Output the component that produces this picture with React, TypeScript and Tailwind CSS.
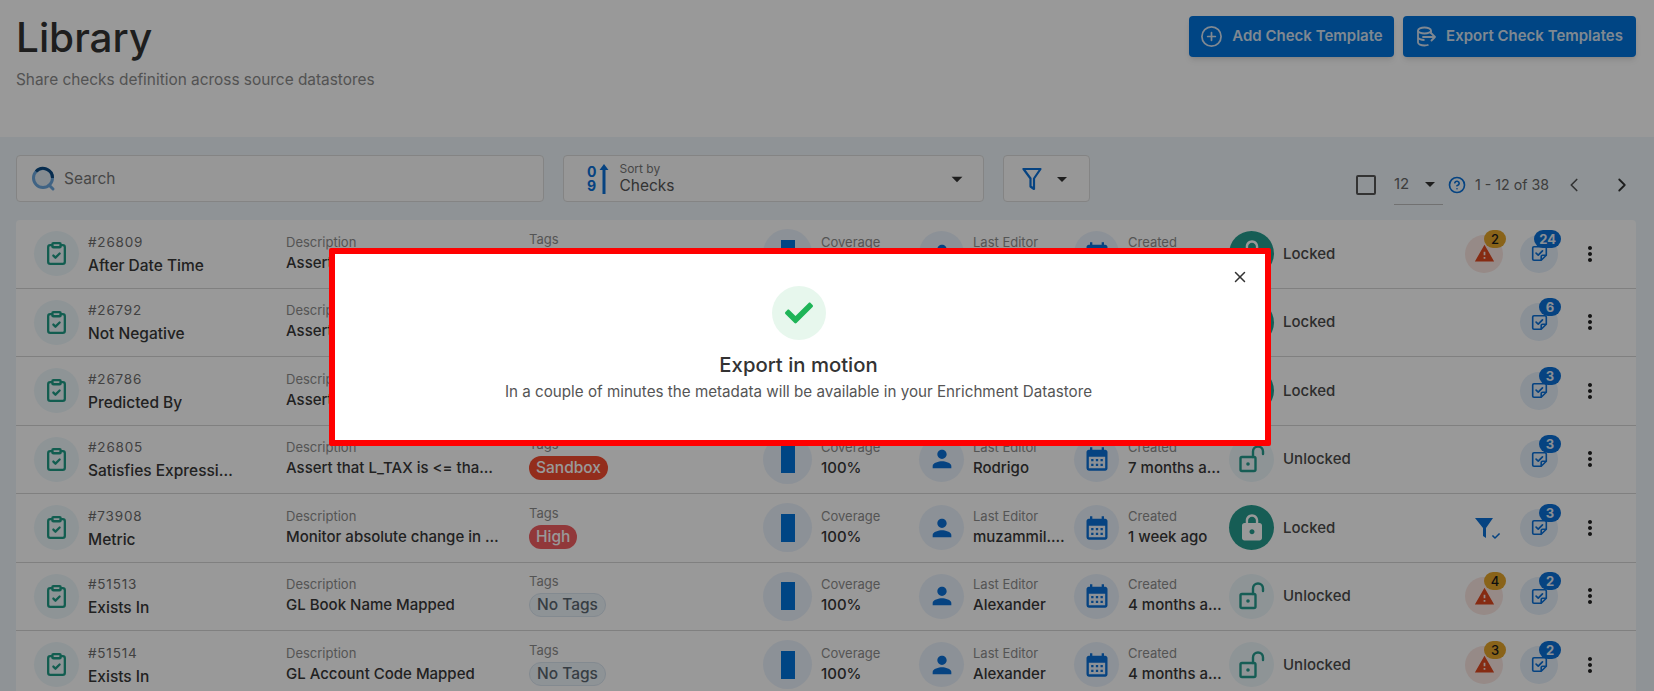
import { ChevronLeft, ChevronRight, CirclePlus, ClipboardCheck, CircleHelp, X } from "lucide-react";
import { FaCheck } from "react-icons/fa";
import { MdArrowDropDown, MdCalendarMonth, MdLock, MdMoreVert, MdPerson, MdWarning } from "react-icons/md";

type Row = {
  id: string;
  name: string;
  desc: string;
  tag: string;
  editor: string;
  created: string;
  locked: boolean;
  warn?: number;
  checks: number;
  funnel?: boolean;
};

const rows: Row[] = [
  { id: "#26809", name: "After Date Time", desc: "Assert that the date is after", tag: "No Tags", editor: "Alexander", created: "7 months ago", locked: true, warn: 2, checks: 24 },
  { id: "#26792", name: "Not Negative", desc: "Assert that value is positive", tag: "No Tags", editor: "Alexander", created: "7 months ago", locked: true, checks: 6 },
  { id: "#26786", name: "Predicted By", desc: "Assert that value is predicted", tag: "No Tags", editor: "Alexander", created: "7 months ago", locked: true, checks: 3 },
  { id: "#26805", name: "Satisfies Expression", desc: "Assert that L_TAX is <= than something", tag: "Sandbox", editor: "Rodrigo", created: "7 months ago", locked: false, checks: 3 },
  { id: "#73908", name: "Metric", desc: "Monitor absolute change in the metric", tag: "High", editor: "muzammil.khan", created: "1 week ago", locked: true, checks: 3, funnel: true },
  { id: "#51513", name: "Exists In", desc: "GL Book Name Mapped", tag: "No Tags", editor: "Alexander", created: "4 months ago", locked: false, warn: 4, checks: 2 },
  { id: "#51514", name: "Exists In", desc: "GL Account Code Mapped", tag: "No Tags", editor: "Alexander", created: "4 months ago", locked: false, warn: 3, checks: 2 },
];

const OpenLock = () => (
  <svg width="28" height="30" viewBox="0 0 28 30" fill="none" stroke="#269c8e" strokeWidth="2.4">
    <rect x="2.500" y="13" width="15" height="14" rx="1.500" />
    <circle cx="10" cy="20" r="1.800" fill="#269c8e" stroke="none" />
    <path d="M15 13V7.500a5 5 0 0 1 10 0V10" strokeLinecap="round" />
  </svg>
);

const NoteCheck = () => (
  <svg width="17" height="17" viewBox="0 0 20 20" fill="none" stroke="#0a70d8" strokeWidth="1.900" strokeLinejoin="round">
    <path d="M2 3.500A1.500 1.500 0 0 1 3.500 2h13A1.500 1.500 0 0 1 18 3.500V12l-6 6H3.500A1.500 1.500 0 0 1 2 16.500z" />
    <path d="M12 18v-4.500A1.500 1.500 0 0 1 13.500 12H18" />
    <path d="m6 9.500 2.500 2.300 5-5" strokeWidth="2" strokeLinecap="round" />
  </svg>
);

const SearchLogo = () => (
  <svg width="26" height="26" viewBox="0 0 26 26" fill="none">
    <circle cx="12" cy="12" r="9.500" fill="#dfe9f2" stroke="#6ba6dc" strokeWidth="3" />
    <path d="M5 5.500A9.500 9.500 0 0 1 21.500 12" stroke="#0c4a82" strokeWidth="3" />
    <path d="m18 19 4 4" stroke="#6ba6dc" strokeWidth="3" strokeLinecap="round" />
  </svg>
);

const ExportIcon = () => (
  <svg width="20" height="22" viewBox="0 0 20 22" fill="none" stroke="#d5e3f2" strokeWidth="1.800">
    <ellipse cx="8.500" cy="4.500" rx="6.500" ry="3" />
    <path d="M2 4.500v12c0 1.600 2.900 3 6.500 3 1.600 0 3-.2 4-.7M2 11c0 1.600 2.900 3 6.500 3M15 4.500V8" />
    <path d="M7 11h12m-3.500-3.500L19 11l-3.500 3.500" strokeLinecap="round" strokeLinejoin="round" />
  </svg>
);

const FilterOutline = () => (
  <svg width="20" height="24" viewBox="0 0 20 24" fill="none" stroke="#0a70d8" strokeWidth="2.200" strokeLinejoin="round">
    <path d="M1.500 2h17l-6.500 9.500V22l-3.500-2.500v-8z" />
  </svg>
);

const FilterSolid = () => (
  <svg width="20" height="24" viewBox="0 0 20 24" fill="#0a70d8">
    <path d="M1 2h18l-7 10v10l-3-2v-8z" />
  </svg>
);

const SortArrow = () => (
  <svg width="10" height="32" viewBox="0 0 10 32" fill="#0a70d8">
    <path d="M5 1 9.500 7h-3v24h-3V7h-3z" />
  </svg>
);

function Tag({ tag }: { tag: string }) {
  if (tag === "Sandbox") return <span className="h-6 rounded-full bg-[#f54b2f] px-[7px] text-[15.500px] leading-6 font-medium text-white">Sandbox</span>;
  if (tag === "High") return <span className="h-6 rounded-full bg-[#f25e62] px-[7px] text-[15.500px] leading-6 font-medium text-white">High</span>;
  return <span className="h-6 rounded-full border border-[#dbe6f0] bg-[#edf5fa] px-[7px] text-[15.500px] leading-[22px] font-medium text-[#5b6670]">{tag}</span>;
}

function LabelValue({ label, value }: { label: string; value: string }) {
  return (
    <div className="min-w-0 flex-1 pb-[3px]">
      <div className="text-[13px] leading-[20px] text-[#8d8d8d]">{label}</div>
      <div className="truncate text-[15px] leading-[21px] font-medium text-[#383838]">{value}</div>
    </div>
  );
}

function TableRow({ row }: { row: Row }) {
  return (
    <div className="grid h-[68.500px] grid-cols-[252px_243px_234px_156px_155px_155px_236px_55px_55px_1fr] items-center border-b border-[#d6d6d6] pl-[18px]">
      <div className="flex items-center gap-[9px] pr-[52px]">
        <div className="flex h-[45px] w-[45px] shrink-0 items-center justify-center rounded-full bg-[#edf7fb]">
          <ClipboardCheck size={25} strokeWidth={2.200} className="text-[#1f9c85]" />
        </div>
        <div className="min-w-0">
          <div className="text-[13.500px] leading-[20px] tracking-[0.8px] text-[#6d6d6d]">{row.id}</div>
          <div className="mt-[4px] truncate text-[15.500px] leading-[20px] font-medium text-[#383838]">{row.name}</div>
        </div>
      </div>
      <div className="pr-[30px]">
        <LabelValue label="Description" value={row.desc} />
      </div>
      <div className="flex flex-col items-start pb-[3px]">
        <div className="mb-[3px] text-[13px] leading-[18px] text-[#8d8d8d]">Tags</div>
        <Tag tag={row.tag} />
      </div>
      <div className="flex items-center gap-[9px]">
        <div className="flex h-[49px] w-[49px] shrink-0 items-center justify-center rounded-full bg-[#eaf2fc]">
          <div className="h-[28px] w-[14px] bg-[#0073dc]" />
        </div>
        <LabelValue label="Coverage" value="100%" />
      </div>
      <div className="flex items-center gap-[9px] pr-[8px]">
        <div className="flex h-[45px] w-[45px] shrink-0 items-center justify-center rounded-full bg-[#eaf2fc]">
          <MdPerson size={28} className="text-[#0a70d8]" />
        </div>
        <LabelValue label="Last Editor" value={row.editor} />
      </div>
      <div className="flex items-center gap-[9px] pr-[5px]">
        <div className="flex h-[45px] w-[45px] shrink-0 items-center justify-center rounded-full bg-[#eaf2fc]">
          <MdCalendarMonth size={28} className="text-[#0a70d8]" />
        </div>
        <LabelValue label="Created" value={row.created} />
      </div>
      <div className="flex items-center gap-[9px]">
        {row.locked ? (
          <div className="flex h-[45px] w-[45px] items-center justify-center rounded-full bg-[#269c8e]">
            <MdLock size={30} className="text-white" />
          </div>
        ) : (
          <div className="flex h-[45px] w-[45px] items-center justify-center rounded-full bg-[#edf7fb]">
            <OpenLock />
          </div>
        )}
        <span className="text-[15px] font-medium text-[#4b4b4b]">{row.locked ? "Locked" : "Unlocked"}</span>
      </div>
      <div className="relative h-[38px] w-[38px]">
        {row.warn ? (
          <>
            <div className="flex h-[38px] w-[38px] items-center justify-center rounded-full bg-[#fbe6e2]">
              <MdWarning size={21} className="text-[#e0481e]" />
            </div>
            <span className="absolute -top-[5px] left-[19px] h-[18px] w-[22px] rounded-full bg-[#e5a52a] text-center text-[13px] leading-[18px] font-medium text-[#1a1a1a]">
              {row.warn}
            </span>
          </>
        ) : null}
        {row.funnel ? (
          <div className="relative flex h-[38px] w-[38px] items-center justify-center">
            <FilterSolid />
            <FaCheck size={8} className="absolute right-[3px] bottom-[7px] text-[#0a70d8]" />
          </div>
        ) : null}
      </div>
      <div className="relative flex h-[38px] w-[38px] items-center justify-center rounded-full bg-[#e6f0fb]">
        <NoteCheck />
        <span className="absolute -top-[5px] right-[-3px] h-[18px] min-w-[22px] rounded-full bg-[#0a70d8] px-[5px] text-center text-[13px] leading-[18px] font-bold text-[#e6eef7]">
          {row.checks}
        </span>
      </div>
      <MdMoreVert size={24} className="ml-[3px] text-[#222]" />
    </div>
  );
}

export default function App() {
  return (
    <div className="relative h-[691px] w-full overflow-hidden bg-[#eef6fb] font-['Inter',sans-serif]">
      <header className="flex h-[137px] items-start justify-between bg-white px-[16px] pt-[16px] pr-[18px]">
        <div>
          <h1 className="text-[40.500px] leading-[44px] font-medium text-[#333]">Library</h1>
          <p className="mt-[10px] text-[15.400px] leading-5 text-[#8a8a8a]">Share checks definition across source datastores</p>
        </div>
        <div className="flex gap-[9px]">
          <button className="flex h-[41px] w-[205px] items-center justify-center gap-[9px] rounded bg-[#0073dc] text-[15px] font-semibold text-[#d5e3f2] shadow-md">
            <CirclePlus size={23} strokeWidth={1.800} />
            Add Check Template
          </button>
          <button className="flex h-[41px] w-[233px] items-center justify-center gap-[10px] rounded bg-[#0073dc] text-[15px] font-semibold text-[#d5e3f2] shadow-md">
            <ExportIcon />
            Export Check Templates
          </button>
        </div>
      </header>

      <main className="px-[16px] pt-[18px] pr-[18px]">
        <div className="flex h-[47px] items-center">
          <div className="flex h-[47px] w-[528px] items-center gap-[7px] rounded border border-[#dcdcdc] bg-[#fcfcfc] pl-[14px]">
            <SearchLogo />
            <span className="text-[15.500px] text-[#777]">Search</span>
          </div>
          <div className="ml-[19px] flex h-[47px] w-[421px] items-center rounded border border-[#dcdcdc] bg-[#fcfcfc] pr-[13px] pl-[23px]">
            <div className="flex items-center gap-[3px]">
              <div className="flex flex-col text-[14px] leading-[14px] font-bold text-[#0a70d8]">
                <span>0</span>
                <span>9</span>
              </div>
              <SortArrow />
            </div>
            <div className="ml-[10px] flex-1">
              <div className="text-[12px] leading-[14px] text-[#777]">Sort by</div>
              <div className="text-[15.500px] leading-[20px] text-[#555]">Checks</div>
            </div>
            <MdArrowDropDown size={26} className="text-[#333]" />
          </div>
          <div className="ml-[19px] flex h-[47px] w-[87px] items-center gap-[8px] rounded border border-[#dcdcdc] bg-[#fcfcfc] pl-[18px]">
            <FilterOutline />
            <MdArrowDropDown size={24} className="text-[#333]" />
          </div>
          <div className="mt-[12px] ml-auto flex items-center">
            <div className="h-[20px] w-[20px] rounded-[2px] border-2 border-[#555]" />
            <div className="ml-[18px] flex h-[40px] w-[49px] items-center justify-between border-b border-[#bdbdbd]">
              <span className="text-[15px] text-[#666]">12</span>
              <MdArrowDropDown size={24} className="mr-[1px] text-[#333]" />
            </div>
            <CircleHelp size={18} strokeWidth={2.200} className="ml-[5px] text-[#0a70d8]" />
            <span className="ml-[9px] text-[14.200px] text-[#666]">1 - 12 of 38</span>
            <ChevronLeft size={22} strokeWidth={1.800} className="ml-[14px] text-[#555]" />
            <ChevronRight size={22} strokeWidth={2} className="mr-[3px] ml-[26px] text-[#333]" />
          </div>
        </div>

        <section className="mt-[18px] rounded-t bg-white">
          {rows.map((row) => (
            <TableRow key={row.id} row={row} />
          ))}
        </section>
      </main>

      {/* Modal backdrop */}
      <div className="absolute inset-0 bg-black/40" />

      {/* Export dialog with the red highlight of the screenshot */}
      <div className="absolute top-[248px] left-[329px] flex h-[198px] w-[942px] flex-col items-center rounded-[2px] border-[6px] border-[#ff0000] bg-white pt-[32px] pr-[3px]">
        <X size={18} className="absolute top-[14px] right-[16px] text-[#333]" />
        <div className="flex h-[54px] w-[54px] items-center justify-center rounded-full bg-[#e7f7ed]">
          <FaCheck size={28} className="text-[#1eb457]" />
        </div>
        <div className="mt-[12px] text-[20.300px] leading-[26px] font-medium text-[#333]">Export in motion</div>
        <div className="text-[15.200px] leading-[27px] text-[#555]">In a couple of minutes the metadata will be available in your Enrichment Datastore</div>
      </div>
    </div>
  );
}
